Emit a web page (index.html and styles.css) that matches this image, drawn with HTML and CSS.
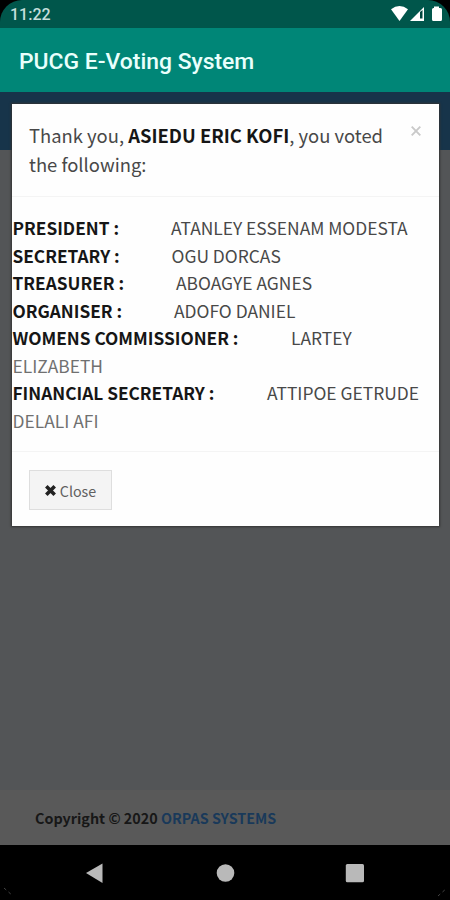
FILE: index.html
```
<!DOCTYPE html>
<html lang="en">
<head>
<meta charset="utf-8">
<title>PUCG E-Voting System</title>
<link rel="stylesheet" href="styles.css">
</head>
<body>
<div class="phone">
  <header class="status">
    <span class="clock">11:22</span>
    <svg class="status-icons" width="52" height="16" viewBox="0 0 52 16" fill="#fff">
      <path d="M0 3.2Q8.500-3 17 3.200L8.500 15Z"/>
      <path d="M33 1V15H19Z"/>
      <path d="M29 6L31.500 4V12.500H29Z" fill="#00463e"/>
      <path d="M43 2V0.500H48V2H49.500Q51 2 51 3.500V13.500Q51 15 49.500 15H42.500Q41 15 41 13.500V3.500Q41 2 42.500 2Z"/>
    </svg>
  </header>
  <div class="appbar"><h1 class="app-title">PUCG E-Voting System</h1></div>
  <main class="page">
    <div class="navbar"></div>
    <div class="content"></div>
    <footer class="footer">Copyright © 2020 <span class="brand">ORPAS SYSTEMS</span></footer>
    <section class="modal">
      <div class="modal-header">
        <h2 class="modal-title">Thank you, <b>ASIEDU ERIC KOFI</b>, you voted<br>the following:</h2>
        <svg class="dismiss" width="10" height="10" viewBox="0 0 10 10" stroke="#c9c9c9" stroke-width="1.900"><path d="M.7.7L9.300 9.300M9.300.7L.7 9.300"/></svg>
      </div>
      <div class="modal-body">
        <div><b class="r1">PRESIDENT :</b><span>ATANLEY ESSENAM MODESTA</span></div>
        <div><b class="r2">SECRETARY :</b><span>OGU DORCAS</span></div>
        <div><b class="r3">TREASURER :</b><span>ABOAGYE AGNES</span></div>
        <div><b class="r4">ORGANISER :</b><span>ADOFO DANIEL</span></div>
        <div><b class="r5">WOMENS COMMISSIONER :</b><span>LARTEY</span></div>
        <div class="light">ELIZABETH</div>
        <div><b class="r6">FINANCIAL SECRETARY :</b><span>ATTIPOE GETRUDE</span></div>
        <div class="light">DELALI AFI</div>
      </div>
      <div class="modal-footer">
        <div class="close">
          <svg width="11" height="11" viewBox="0 0 11 11" stroke="#222" stroke-width="3.600"><path d="M1.300 1.300L9.700 9.700M9.700 1.300L1.300 9.700"/></svg>
          <span>Close</span>
        </div>
      </div>
    </section>
  </main>
  <nav class="sysnav">
    <svg width="450" height="55" viewBox="0 0 450 55" fill="#b9b9b9">
      <path d="M86 28L102.500 18.500V38Z"/>
      <circle cx="225.500" cy="28" r="8.800"/>
      <rect x="345.800" y="19" width="18.200" height="18.200" rx="1.500"/>
      <path d="M4 43L13 51M438 51L447 43" stroke="#444" stroke-width="1" stroke-dasharray="3 3"/>
    </svg>
  </nav>
</div>
</body>
</html>
```
FILE: styles.css
```
* { box-sizing: border-box; }
body { margin: 0; background: #000; font-family: "Noto Sans CJK JP", "Noto Sans", sans-serif; }
.phone { width: 450px; height: 900px; display: flex; flex-direction: column; overflow: hidden; border-radius: 22px 22px 0 0; }
.status { height: 28px; background: #00564b; display: flex; justify-content: space-between; align-items: center; padding: 0 7px 0 10px; }
.clock { font: 500 16px/28px Roboto, sans-serif; color: #c4dedb; padding-top: 2px; }
.status-icons { display: block; }
.appbar { height: 64px; background: #008677; padding-left: 19px; }
.app-title { margin: 0; font: 500 22.900px/68px Roboto, sans-serif; color: #e9fffc; white-space: nowrap; }
.page { position: relative; height: 753px; display: flex; flex-direction: column; background: #535557; }
.navbar { height: 58px; background: #17344a; }
.content { flex: 1; }
.footer { height: 55px; background: #595959; padding-left: 35px; font-size: 14.350px; line-height: 55px; font-weight: 700; color: #171717; white-space: nowrap; }
.brand { color: #19395a; }
.modal { position: absolute; left: 12px; top: 12px; width: 427px; height: 422px; background: #fefefe; box-shadow: 0 0 2px 1px #333; white-space: nowrap; color: #484848; }
.modal-header { height: 93px; border-bottom: 1px solid #f4f4f4; padding: 17px 18px 0 17px; display: flex; justify-content: space-between; }
.modal-title { margin: 0; font-size: 18.420px; font-weight: 400; line-height: 29px; }
.modal-title b, .modal-body b { color: #161616; font-weight: 700; }
.dismiss { margin-top: 5px; }
.modal-body { height: 255px; padding: 17px 0 0 0.500px; border-bottom: 1px solid #f4f4f4; font-size: 17.400px; line-height: 27.500px; }
.modal-body div { display: flex; height: 27.500px; }
.modal-body b { flex: none; font-size: 17.250px; }
.r1 { width: 158.500px; }
.r2 { width: 159px; }
.r3 { width: 163.500px; }
.r4 { width: 161.500px; }
.r5 { width: 278.500px; }
.r6 { width: 254.500px; }
.modal-body .light { color: #707070; }
.modal-footer { padding: 18px 17px; }
.close { width: 83px; height: 40px; border: 1px solid #dedede; background: #f4f4f4; display: flex; align-items: center; justify-content: center; gap: 4px; font-size: 14.300px; color: #606060; }
.sysnav { height: 55px; background: #000; }
.sysnav svg { display: block; }
```
